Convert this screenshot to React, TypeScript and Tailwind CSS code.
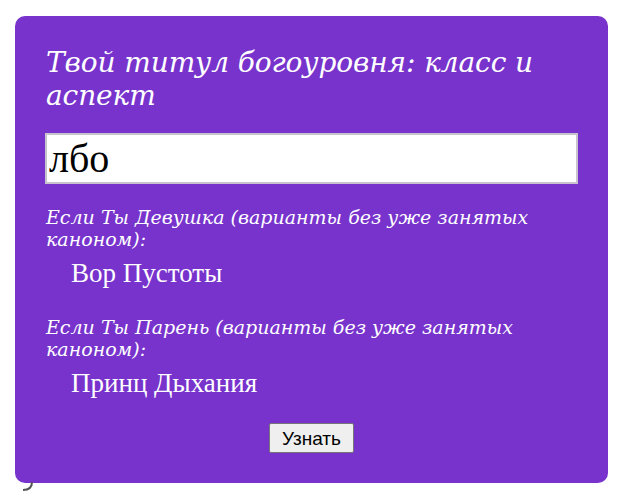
export default function App() {
   return (
      <div className="relative min-h-screen bg-white pt-4 px-[15px]">
         <div className="w-[593px] h-[467px] rounded-[10px] bg-[#7733cc] px-[31px] pt-[30px] text-white">
            <h1 className="font-['DejaVu_Serif',serif] italic text-[28px] leading-[33px] font-normal tracking-[-0.1px]">
               Твой титул богоуровня: класс и аспект
            </h1>
            <input
               className="mt-[21px] block w-[533px] h-[51px] -ml-px border-2 border-[#c9c3d0] bg-white px-[2px] text-black font-['Liberation_Serif',serif] text-[40px] outline-none"
               defaultValue="лбо"
            />
            <p className="mt-[22px] font-['DejaVu_Serif',serif] italic text-[19px] leading-[22px]">
               Если Ты Девушка (варианты без уже занятых каноном):
            </p>
            <p className="mt-[8px] ml-[25px] font-['Liberation_Serif',serif] text-[27px] leading-[30px]">Вор Пустоты</p>
            <p className="mt-[28px] font-['DejaVu_Serif',serif] italic text-[19px] leading-[22px]">
               Если Ты Парень (варианты без уже занятых каноном):
            </p>
            <p className="mt-[8px] ml-[25px] font-['Liberation_Serif',serif] text-[27px] leading-[30px]">Принц Дыхания</p>
            <div className="mt-[25px] flex justify-center">
               <button className="h-[30px] px-[12px] border border-[#767676] rounded-[2px] bg-[#efefef] text-black font-['Liberation_Sans',sans-serif] text-[19px] leading-none">
                  Узнать
               </button>
            </div>
         </div>
         <svg className="absolute left-[20px] top-[482px]" width="14" height="10" viewBox="0 0 14 10">
            <path d="M12 0 C12 5 9 8 3 8" fill="none" stroke="#555" strokeWidth="2" />
         </svg>
      </div>
   )
}
